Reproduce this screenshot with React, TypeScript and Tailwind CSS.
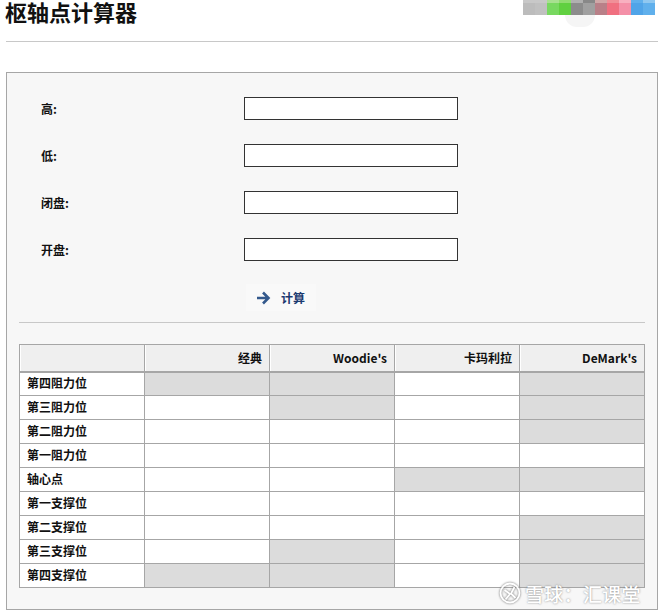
const fields = ["高:", "低:", "闭盘:", "开盘:"];
const headers = ["经典", "Woodie's", "卡玛利拉", "DeMark's"];

// true = greyed out cell
const rows: { label: string; off: boolean[] }[] = [
  { label: "第四阻力位", off: [true, true, false, true] },
  { label: "第三阻力位", off: [false, true, false, true] },
  { label: "第二阻力位", off: [false, false, false, true] },
  { label: "第一阻力位", off: [false, false, false, false] },
  { label: "轴心点", off: [false, false, true, true] },
  { label: "第一支撑位", off: [false, false, false, false] },
  { label: "第二支撑位", off: [false, false, false, true] },
  { label: "第三支撑位", off: [false, true, false, true] },
  { label: "第四支撑位", off: [true, true, false, true] },
];

// pixelated block covering the top right corner
const mosaic = [
  ["#c8c8c8", "#c8c8c8", "#a8e090", "#90dc70", "#b0b0b0", "#888888", "#d0a8a8", "#f09098", "#f8b0c0", "#60b0ec", "#90c8f0"],
  ["#bcbcbc", "#c0c0c0", "#78d860", "#60d040", "#8c8c8c", "#a0a0a0", "#b88088", "#f07080", "#f490a8", "#50a4e8", "#60b0ec"],
];

function Mosaic() {
  return (
    <div className="absolute top-0 left-[523px] grid w-[132px] grid-cols-[repeat(11,12px)] grid-rows-[3px_12px]">
      {mosaic.flat().map((c, i) => (
        <div key={i} style={{ backgroundColor: c }} />
      ))}
    </div>
  );
}

function Watermark() {
  return (
    <div className="absolute top-[581px] left-[499px] flex h-[24px] items-center gap-[4px] text-white [text-shadow:0_0_2px_rgba(90,90,90,0.75)]">
      <svg width="22" height="22" viewBox="0 0 22 22" fill="none" stroke="#fff" strokeWidth="1.8" className="drop-shadow-[0_0_1px_rgba(90,90,90,0.9)]">
        <circle cx="11" cy="11" r="9.5" />
        <path d="M5.5 8 L11 12 L6.5 17.5 M15.5 5 L12 11.5 L16.5 16" />
      </svg>
      <span className="text-[19px] leading-none font-medium tracking-[0.3px]">雪球：汇课堂</span>
    </div>
  );
}

export default function App() {
  return (
    <div className="relative h-[613px] w-[661px] overflow-hidden bg-white font-['Noto_Sans_CJK_SC','Noto_Sans',sans-serif] text-[#111]">
      <h1 className="ml-[5px] h-[26px] text-[22px] leading-[22px] font-bold">枢轴点计算器</h1>
      <div className="mt-[15px] ml-[6px] h-px w-[652px] bg-[#c8c8c8]" />

      <div className="mt-[30px] ml-[6px] h-[538px] w-[652px] border border-[#a6a6a6] bg-[#f7f7f7] px-3 pt-[24px]">
        <div className="flex flex-col gap-[24px]">
          {fields.map((f) => (
            <div key={f} className="flex h-[23px] items-center">
              <label className="ml-[22px] w-[203px] text-xs font-bold">{f}</label>
              <input className="h-[23px] w-[214px] border border-[#333] bg-white" />
            </div>
          ))}
        </div>

        <div className="mt-[23px] ml-[227px] flex h-[27px] w-[70px] items-center bg-[#f9f9f9] pl-[10px]">
          <svg width="15" height="14" viewBox="0 0 15 14" fill="none" stroke="#33598c" strokeWidth="2.6">
            <path d="M1 7 H12 M7 1.5 L12.5 7 L7 12.5" />
          </svg>
          <span className="ml-[10px] text-xs font-bold text-[#1c3a70]">计算</span>
        </div>

        <div className="mt-[11px] h-px w-[626px] bg-[#c8c8c8]" />

        <table className="mt-[21px] w-[626px] table-fixed border-collapse text-xs font-bold">
          <thead>
            <tr className="h-[27px] bg-[#efefef]">
              <th className="border border-b-2 border-[#a6a6a6] shadow-[inset_1px_0_0_#fff]" />
              {headers.map((h) => (
                <th key={h} className="border border-b-2 border-[#a6a6a6] pr-[7px] text-right font-bold shadow-[inset_1px_0_0_#fff]">
                  {h}
                </th>
              ))}
            </tr>
          </thead>
          <tbody>
            {rows.map((r) => (
              <tr key={r.label} className="h-[24px]">
                <td className="border border-[#a6a6a6] bg-white pb-[2px] pl-[7px]">{r.label}</td>
                {r.off.map((off, i) => (
                  <td key={i} className={off ? "border border-[#a6a6a6] bg-[#dcdcdc]" : "border border-[#a6a6a6] bg-white"} />
                ))}
              </tr>
            ))}
          </tbody>
        </table>
      </div>

      <Mosaic />
      <div className="absolute top-[15px] left-[565px] h-[12px] w-[30px] rounded-b-full bg-[#f5f5f5]" />
      <Watermark />
    </div>
  );
}
